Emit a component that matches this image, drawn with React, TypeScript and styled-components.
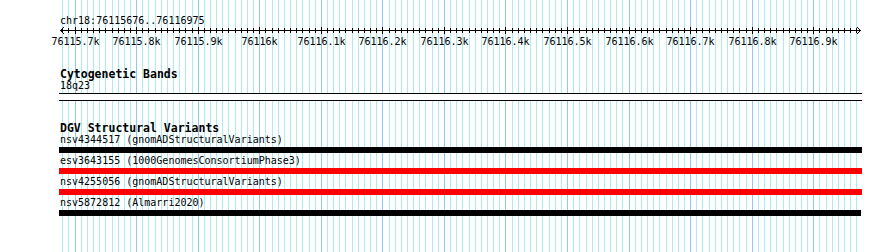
import React from "react";
import styled, { createGlobalStyle } from "styled-components";

const START = 76115676;
const END = 76116975;
const ORIGIN = 60.3; // page x of START
const PX_PER_BP = 0.6156;
const TRACK_LEFT = 59;
const TRACK_WIDTH = 803;

const bpToX = (bp: number) => ORIGIN + (bp - START) * PX_PER_BP;

const GlobalStyle = createGlobalStyle`
  html, body {
    margin: 0;
    padding: 0;
    background: #ffffff;
  }
  body {
    font-family: "DejaVu Sans Mono", "Liberation Mono", monospace;
    color: #000000;
  }
`;

const Page = styled.div`
  position: relative;
  width: 890px;
  height: 252px;
  overflow: hidden;
  background: #ffffff;
`;

const GridLayer = styled.svg`
  position: absolute;
  left: 0;
  top: 0;
  z-index: 0;
`;

const Tracks = styled.div`
  position: relative;
  z-index: 1;
  display: flex;
  flex-direction: column;
  padding-left: ${TRACK_LEFT}px;
  width: ${TRACK_WIDTH}px;
`;

const Location = styled.div`
  margin-top: 15px;
  margin-left: 1px;
  font-size: 10px;
  line-height: 12px;
  height: 12px;
  white-space: nowrap;
`;

const RulerSvg = styled.svg`
  display: block;
  overflow: visible;
`;

const Track = styled.section<{ $top: number }>`
  display: flex;
  flex-direction: column;
  margin-top: ${(p) => p.$top}px;
`;

const TrackTitle = styled.div`
  margin-left: 1px;
  font-size: 11.5px;
  font-weight: bold;
  line-height: 11px;
  height: 10px;
  white-space: nowrap;
`;

const FeatureLabel = styled.div`
  margin-left: 1px;
  font-size: 10px;
  line-height: 14px;
  height: 14px;
  white-space: nowrap;
`;

const Band = styled.div`
  box-sizing: border-box;
  width: ${TRACK_WIDTH}px;
  height: 8px;
  border-top: 1px solid #000000;
  border-bottom: 1px solid #000000;
  background: #ffffff;
`;

const Feature = styled.div`
  display: flex;
  flex-direction: column;
  margin-bottom: 1px;
`;

const Bar = styled.div<{ $color: string; $width: number }>`
  width: ${(p) => p.$width}px;
  height: 6px;
  background: ${(p) => p.$color};
`;

const gridStops: number[] = [];
for (let bp = 76115680; bp <= 76116970; bp += 10) gridStops.push(bp);

const Grid = () => (
  <GridLayer width={890} height={252} shapeRendering="crispEdges">
    {gridStops.map((bp) => (
      <rect
        key={bp}
        x={Math.round(bpToX(bp) - 0.5)}
        y={0}
        width={1}
        height={252}
        fill={bp % 100 === 0 ? "#8ccaf0" : "#aaecf0"}
      />
    ))}
  </GridLayer>
);

const Ruler = () => {
  const sx = (bp: number) => Math.round(bpToX(bp) - 0.5) - TRACK_LEFT + 0.5;
  const majors = gridStops.filter((bp) => bp % 100 === 0);
  return (
    <RulerSvg width={TRACK_WIDTH} height={20}>
      <g stroke="#000" strokeWidth={1} fill="none" shapeRendering="crispEdges">
        <line x1={1} y1={3.5} x2={802} y2={3.5} />
        {gridStops.map((bp) => (
          <line
            key={bp}
            x1={sx(bp)}
            x2={sx(bp)}
            y1={bp % 100 === 0 ? 0 : 1}
            y2={bp % 100 === 0 ? 7 : 6}
          />
        ))}
      </g>
      <g stroke="#000" strokeWidth={1} fill="none">
        <polyline points="5,0 1.5,3.5 5,7" />
        <polyline points="798,0 801.5,3.5 798,7" />
      </g>
      <g fontFamily='"DejaVu Sans Mono", "Liberation Mono", monospace' fontSize={10} fill="#000">
        {majors.map((bp) => (
          <text key={bp} x={sx(bp)} y={18} textAnchor="middle">
            {bp % 1000 === 0 ? `${bp / 1000}k` : `${(bp / 1000).toFixed(1)}k`}
          </text>
        ))}
      </g>
    </RulerSvg>
  );
};

const variants = [
  { id: "nsv4344517", source: "gnomADStructuralVariants", color: "#000000", width: 803 },
  { id: "esv3643155", source: "1000GenomesConsortiumPhase3", color: "#ff0000", width: 803 },
  { id: "nsv4255056", source: "gnomADStructuralVariants", color: "#ff0000", width: 803 },
  { id: "nsv5872812", source: "Almarri2020", color: "#000000", width: 802 },
];

export default function App() {
  return (
    <Page>
      <GlobalStyle />
      <Grid />
      <Tracks>
        <Location>
          chr18:{START}..{END}
        </Location>
        <Ruler />
        <Track $top={22}>
          <TrackTitle>Cytogenetic Bands</TrackTitle>
          <FeatureLabel>18q23</FeatureLabel>
          <Band />
        </Track>
        <Track $top={22}>
          <TrackTitle>DGV Structural Variants</TrackTitle>
          {variants.map((v) => (
            <Feature key={v.id}>
              <FeatureLabel>
                {v.id} ({v.source})
              </FeatureLabel>
              <Bar $color={v.color} $width={v.width} />
            </Feature>
          ))}
        </Track>
      </Tracks>
    </Page>
  );
}
